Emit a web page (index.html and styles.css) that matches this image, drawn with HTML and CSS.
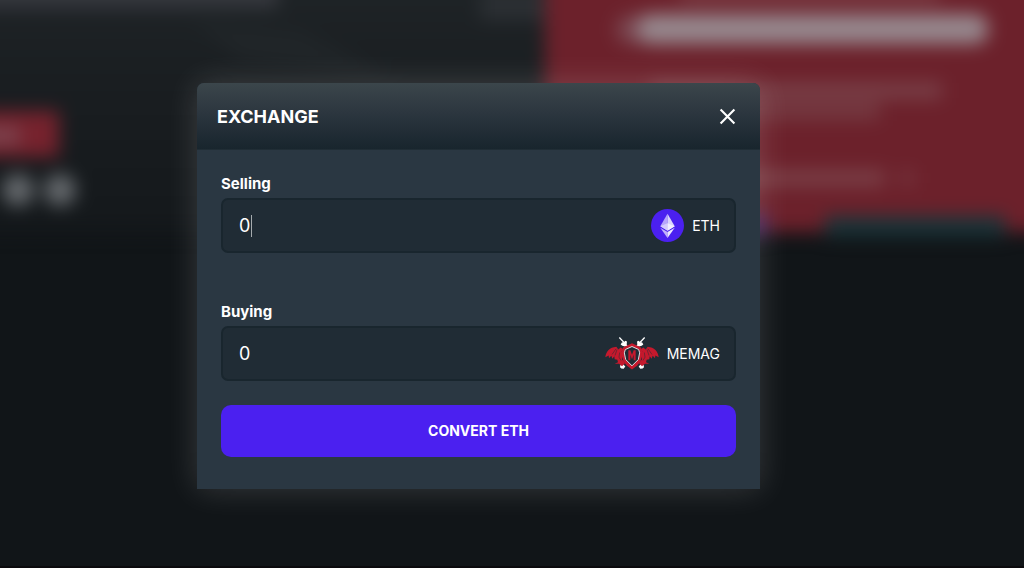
FILE: index.html
```html
<!DOCTYPE html>
<html lang="en">
<head>
<meta charset="utf-8">
<meta name="viewport" content="width=device-width, initial-scale=1">
<title>Exchange</title>
<link rel="stylesheet" href="styles.css">
</head>
<body>
<svg class="backdrop" viewBox="0 0 1024 568" preserveAspectRatio="xMidYMin slice" aria-hidden="true">
  <defs>
    <linearGradient id="hero" x1="0" y1="0" x2="0" y2="1">
      <stop offset="0" stop-color="#202528"/>
      <stop offset="0.5" stop-color="#191d20"/>
      <stop offset="1" stop-color="#14181b"/>
    </linearGradient>
  </defs>
  <rect width="1024" height="568" fill="#111518"/>
  <g class="soft">
    <rect x="-40" y="-40" width="590" height="272" fill="url(#hero)"/>
    <rect x="-40" y="-20" width="318" height="28" fill="#36383e"/>
    <path d="M190 20L300 30L400 80L240 60Z" fill="#202528"/>
    <path d="M480 -10H545V20H480Z" fill="#2b2f33"/>
    <rect x="-40" y="111" width="99" height="46" fill="#76222d"/>
    <rect x="-40" y="127" width="60" height="17" fill="#7b4550"/>
    <circle cx="18" cy="190" r="16" fill="#64686c"/>
    <circle cx="60" cy="190" r="16" fill="#64686c"/>
    <rect x="545" y="-40" width="520" height="272" fill="#6c212b"/>
    <rect x="680" y="-14" width="260" height="17" fill="#783840"/>
    <rect x="616" y="15" width="40" height="29" rx="14" fill="#7a4650"/>
    <rect x="638" y="14" width="350" height="30" rx="13" fill="#96878d"/>
    <rect x="650" y="82" width="292" height="17" fill="#783e46"/>
    <rect x="690" y="102" width="190" height="18" fill="#743840"/>
    <rect x="690" y="170" width="195" height="16" fill="#7a3f47"/>
    <rect x="900" y="171" width="14" height="14" fill="#76363f"/>
    <rect x="680" y="214" width="88" height="22" fill="#46245c"/>
    <rect x="825" y="216" width="180" height="20" fill="#1b3439"/>
  </g>
  <rect y="566" width="1024" height="2" fill="#0b0a0d"/>
</svg>
<main class="stage">
  <form class="modal" role="dialog" aria-labelledby="title" onsubmit="return false">
    <header class="modal-head">
      <h1 id="title">EXCHANGE</h1>
      <button class="close" type="button" aria-label="Close">
        <svg viewBox="0 0 16 16" aria-hidden="true"><path d="M1.5 1.5L14.5 14.5M14.5 1.5L1.5 14.5"/></svg>
      </button>
    </header>
    <div class="modal-body">
      <label class="label" for="sell">Selling</label>
      <div class="field">
        <input class="amount active" id="sell" type="text" inputmode="decimal" value="0">
        <svg class="coin" viewBox="0 0 32 32" aria-hidden="true">
          <circle cx="16" cy="16" r="16" fill="#4b20f0"/>
          <path d="M16 4.5V21L9 16.8Z" fill="#b7a6fa"/>
          <path d="M16 4.5L23 16.8L16 21Z" fill="#dcd5fd"/>
          <path d="M16 13.7V21L9 16.8Z" fill="#d5cbfd"/>
          <path d="M16 13.7L23 16.8L16 21Z" fill="#f2efff"/>
          <path d="M9 18.3L16 22.4V28.2Z" fill="#c0b1fa"/>
          <path d="M23 18.3L16 22.4V28.2Z" fill="#ebe6ff"/>
        </svg>
        <span class="unit">ETH</span>
      </div>
      <label class="label" for="buy">Buying</label>
      <div class="field">
        <input class="amount" id="buy" type="text" inputmode="decimal" value="0">
        <svg class="crest" viewBox="0 0 162 98" aria-hidden="true">
          <defs>
            <g id="half">
              <path d="M43 1L60 19" fill="none" stroke="#fff" stroke-width="4"/>
              <path d="M47 22L51 15L56 16L61 11L66 13L65 22L68 26L60 28L52 26Z" fill="#fff"/>
              <path d="M46 84L53 80L61 88L56 95L49 94L45 90Z" fill="#fff"/>
              <path d="M1 60C3 43 14 31 34 29L40 37L47 31L55 36L50 43L56 53L51 66L60 78L51 87L42 80L29 80L39 75L37 68L29 66L28 57L22 65L19 56L12 63L11 55Z" fill="#c5192d"/>
              <path d="M33 35L21 52M36 37L30 55M44 46L42 60L48 70" fill="none" stroke="#202c35" stroke-width="1.5"/>
            </g>
          </defs>
          <use href="#half"/>
          <use href="#half" transform="translate(162 0) scale(-1 1)"/>
          <path d="M81 18L107 30L112 43L107 72L96 86L81 97L66 86L55 72L50 43L55 30Z" fill="#c5192d"/>
          <path d="M81 28L101 37L104 47L100 67L81 86L62 67L58 47L61 37Z" fill="#202c35" stroke="#d8dde1" stroke-width="3"/>
          <path d="M70 69V39H76L81 53L86 39H92V69H86V52L82 65H80L76 52V69Z" fill="#c5192d"/>
        </svg>
        <span class="unit">MEMAG</span>
      </div>
      <button class="convert" type="submit">CONVERT ETH</button>
    </div>
  </form>
</main>
</body>
</html>
```
FILE: styles.css
```css
* { box-sizing: border-box; }

body {
  margin: 0;
  min-height: 100vh;
  background: #111518;
  color: #fff;
  font-family: Inter, "Liberation Sans", sans-serif;
}

.backdrop {
  position: absolute;
  inset: 0;
  width: 100%;
  height: 100%;
}

.soft { filter: blur(9px); }

.stage {
  position: relative;
  display: flex;
  justify-content: center;
  padding: 83px 83px 16px 16px;
}

.modal {
  width: 100%;
  max-width: 563px;
  background: #2a3742;
  border-radius: 7px 7px 0 0;
  box-shadow: 0 0 32px rgba(255, 255, 255, 0.16);
}

.modal-head {
  display: flex;
  align-items: center;
  justify-content: space-between;
  min-height: 67px;
  padding: 0 24px 0 20px;
  border-bottom: 1px solid #202d35;
  border-radius: 7px 7px 0 0;
  background: linear-gradient(#3b464b, #2c363f 45%, #18252d);
}

h1 {
  margin: 0;
  font-size: 18px;
  font-weight: 700;
}

.close {
  display: flex;
  padding: 0;
  border: 0;
  background: none;
}

.close svg {
  width: 17px;
  height: 17px;
  fill: none;
  stroke: #fff;
  stroke-width: 2;
}

.modal-body {
  display: flex;
  flex-direction: column;
  padding: 22px 24px 32px;
}

.label {
  margin-bottom: 2px;
  font-size: 15px;
  font-weight: 700;
  line-height: 24px;
}

.field {
  display: flex;
  align-items: center;
  min-height: 55px;
  padding: 0 14px 0 16px;
  border: 2px solid #19262e;
  border-radius: 7px;
  background: #202c35;
}

.field + .label { margin-top: 47px; }

.amount {
  flex: 1;
  min-width: 0;
  height: 22px;
  padding: 0;
  border: 0;
  outline: 0;
  background: none;
  color: #fff;
  font: 400 18px/22px Inter, "Liberation Sans", sans-serif;
}

.amount.active {
  background: linear-gradient(#a5abae, #a5abae) 12px 0 / 1px 22px no-repeat;
}

.coin {
  width: 33px;
  height: 33px;
}

.crest {
  width: 54px;
  height: 33px;
}

.unit {
  margin-left: 8px;
  font-size: 14px;
  line-height: 20px;
}

.convert {
  min-height: 52px;
  margin-top: 24px;
  border: 0;
  border-radius: 10px;
  background: #4b20f0;
  color: #fff;
  font: 700 14px/20px Inter, "Liberation Sans", sans-serif;
}
```
